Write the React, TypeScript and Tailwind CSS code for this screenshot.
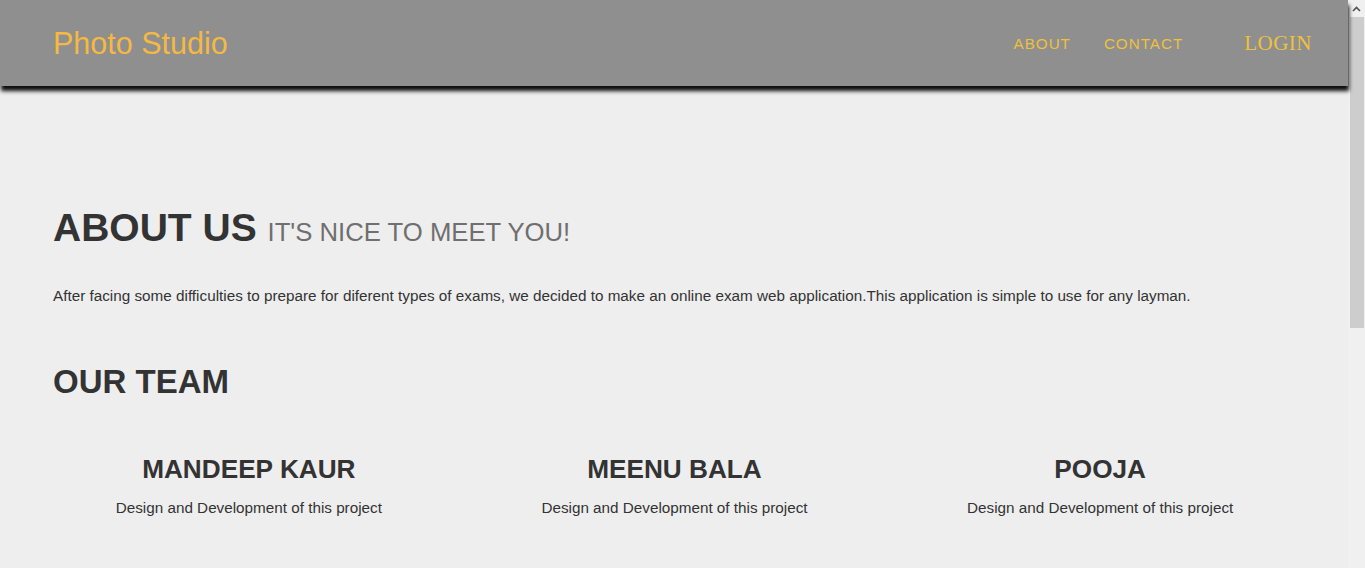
import React from 'react';

const team = [
  { name: 'MANDEEP KAUR', role: 'Design and Development of this project' },
  { name: 'MEENU BALA', role: 'Design and Development of this project' },
  { name: 'POOJA', role: 'Design and Development of this project' },
];

export default function App() {
  return (
    <div className="h-[568px] overflow-hidden flex bg-[#eeeeee] font-['Liberation_Sans',Arial,sans-serif] text-[#333333]">
      <div className="flex-1 min-w-0">
        {/* Navbar */}
        <header className="relative z-10 h-[86px] bg-[#8e8f8e] shadow-[1px_5px_4px_rgba(0,0,0,0.95)] flex items-center justify-between pl-[53px] pr-[36px]">
          <a className="text-[30.5px] text-[#f5b942] leading-none">Photo Studio</a>
          <nav className="flex items-center pt-[2px]">
            <a className="text-[15.2px] tracking-[1px] text-[#efc13c] mr-[33px]">ABOUT</a>
            <a className="text-[15.2px] tracking-[1px] text-[#efc13c] mr-[61px]">CONTACT</a>
            <a className="text-[21px] text-[#efc13c] font-['Liberation_Serif','Times_New_Roman',serif] tracking-[0.5px]">LOGIN</a>
          </nav>
        </header>

        {/* About */}
        <main className="px-[38px]">
          <section className="px-[15px] pt-[122px]">
            <h2 className="text-[39px] font-bold leading-none text-[#333333]">
              ABOUT US <span className="text-[25.7px] font-normal text-[#6f6f6f]">IT'S NICE TO MEET YOU!</span>
            </h2>
            <p className="mt-[39px] text-[15.27px] leading-[20px]">
              After facing some difficulties to prepare for diferent types of exams, we decided to make an online exam web application.This application is simple to use for any layman.
            </p>
            <h2 className="mt-[59px] text-[33px] font-bold leading-none">OUR TEAM</h2>
          </section>

          <section className="grid grid-cols-3 mt-[58px] -ml-[2px] -mr-[3px]">
            {team.map(m => (
              <div key={m.name} className="px-[15px] text-center">
                <h3 className="text-[26.2px] font-bold leading-none">{m.name}</h3>
                <p className="mt-[16px] text-[15.25px] leading-[20px]">{m.role}</p>
              </div>
            ))}
          </section>
        </main>
      </div>

      {/* Scrollbar */}
      <div className="w-[17px] shrink-0 bg-[#f0f0f0] flex flex-col">
        <div className="h-[17px] flex items-center justify-center">
          <svg width="9" height="6" viewBox="0 0 9 6">
            <path d="M1 5 L4.5 1.5 L8 5" fill="none" stroke="#505050" strokeWidth="1.6" />
          </svg>
        </div>
        <div className="h-[311px] ml-[2px] mr-[1px] bg-[#cdcdcd]" />
      </div>
    </div>
  );
}
